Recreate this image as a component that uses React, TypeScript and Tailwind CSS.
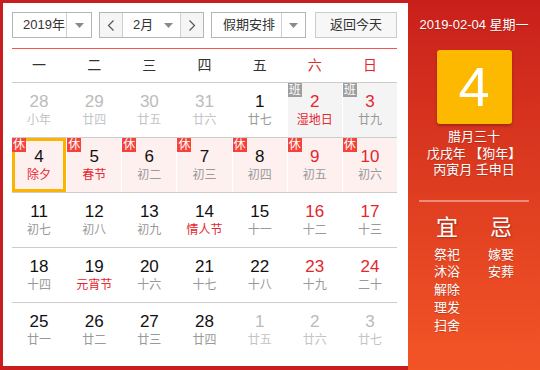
import React from 'react';

type Day = {
  n: number;
  lunar: string;
  tone?: 'other' | 'red';
  lunarRed?: boolean;
  badge?: '休' | '班';
  today?: boolean;
};

const weeks: Day[][] = [
  [
    { n: 28, lunar: '小年', tone: 'other' },
    { n: 29, lunar: '廿四', tone: 'other' },
    { n: 30, lunar: '廿五', tone: 'other' },
    { n: 31, lunar: '廿六', tone: 'other' },
    { n: 1, lunar: '廿七' },
    { n: 2, lunar: '湿地日', tone: 'red', lunarRed: true, badge: '班' },
    { n: 3, lunar: '廿九', tone: 'red', badge: '班' },
  ],
  [
    { n: 4, lunar: '除夕', lunarRed: true, badge: '休', today: true },
    { n: 5, lunar: '春节', lunarRed: true, badge: '休' },
    { n: 6, lunar: '初二', badge: '休' },
    { n: 7, lunar: '初三', badge: '休' },
    { n: 8, lunar: '初四', badge: '休' },
    { n: 9, lunar: '初五', tone: 'red', badge: '休' },
    { n: 10, lunar: '初六', tone: 'red', badge: '休' },
  ],
  [
    { n: 11, lunar: '初七' },
    { n: 12, lunar: '初八' },
    { n: 13, lunar: '初九' },
    { n: 14, lunar: '情人节', lunarRed: true },
    { n: 15, lunar: '十一' },
    { n: 16, lunar: '十二', tone: 'red' },
    { n: 17, lunar: '十三', tone: 'red' },
  ],
  [
    { n: 18, lunar: '十四' },
    { n: 19, lunar: '元宵节', lunarRed: true },
    { n: 20, lunar: '十六' },
    { n: 21, lunar: '十七' },
    { n: 22, lunar: '十八' },
    { n: 23, lunar: '十九', tone: 'red' },
    { n: 24, lunar: '二十', tone: 'red' },
  ],
  [
    { n: 25, lunar: '廿一' },
    { n: 26, lunar: '廿二' },
    { n: 27, lunar: '廿三' },
    { n: 28, lunar: '廿四' },
    { n: 1, lunar: '廿五', tone: 'other' },
    { n: 2, lunar: '廿六', tone: 'other' },
    { n: 3, lunar: '廿七', tone: 'other' },
  ],
];

const weekdays = ['一', '二', '三', '四', '五', '六', '日'];

function Caret() {
  return (
    <svg width="9" height="5" viewBox="0 0 9 5">
      <path d="M0 0h9L4.5 5z" fill="#8a8a8a" />
    </svg>
  );
}

function Chevron({ dir }: { dir: 'left' | 'right' }) {
  return (
    <svg width="8" height="11" viewBox="0 0 8 11">
      <path
        d={dir === 'left' ? 'M6.5 0.5L1.5 5.5l5 5' : 'M1.5 0.5l5 5-5 5'}
        fill="none"
        stroke="#555"
        strokeWidth="1.2"
      />
    </svg>
  );
}

function DayCell({ day }: { day: Day }) {
  const bg = day.badge === '休' ? 'bg-[#fff0f0]' : day.badge === '班' ? 'bg-[#f4f4f4]' : 'bg-white';
  const numColor =
    day.tone === 'other' ? 'text-[#bbbbbb]' : day.tone === 'red' ? 'text-[#e5262d]' : 'text-[#111]';
  const lunarColor =
    day.tone === 'other' ? 'text-[#c4c4c4]' : day.lunarRed ? 'text-[#e5262d]' : 'text-[#999]';

  return (
    <div
      className={`relative flex flex-col items-center pt-[9px] ${bg} ${
        day.today ? 'shadow-[inset_0_0_0_3px_#fbb500]' : ''
      }`}
    >
      <span className={`text-[17px] leading-[20px] ${numColor}`}>{day.n}</span>
      <span className={`text-[12px] leading-[16px] ${lunarColor}`}>{day.lunar}</span>
      {day.badge && (
        <span
          className={`absolute top-0 left-0 w-[14px] h-[14px] text-[12px] leading-[14px] text-center text-white ${
            day.badge === '休' ? 'bg-[#f5433c]' : 'bg-[#9e9e9e]'
          }`}
        >
          {day.badge}
        </span>
      )}
    </div>
  );
}

export default function App() {
  return (
    <div className="flex w-[540px] h-[370px] font-[family-name:Liberation_Sans,Noto_Sans_CJK_SC,sans-serif]">
      {/* Calendar */}
      <div className="w-[408px] h-full bg-white border-l-[3px] border-t-[3px] border-b-[4px] border-[#c91e1d] pl-[9px] pr-[11px] pt-[9px]">
        {/* Toolbar */}
        <div className="flex items-center h-[26px] text-[13px] text-[#333]">
          <div className="flex w-[80px] h-[26px] border border-[#b5b5b5]">
            <span className="flex-1 pl-[10px] leading-[24px]">2019年</span>
            <span className="w-[25px] flex items-center justify-center border-l border-[#cfcfcf]">
              <Caret />
            </span>
          </div>

          <div className="flex ml-[7px] w-[105px] h-[26px] border border-[#b5b5b5]">
            <span className="w-[23px] flex items-center justify-center bg-[#f5f5f5] border-r border-[#cfcfcf]">
              <Chevron dir="left" />
            </span>
            <span className="flex-1 flex items-center pl-[10px] pr-[7px] justify-between">
              <span className="leading-[24px]">2月</span>
              <Caret />
            </span>
            <span className="w-[23px] flex items-center justify-center bg-[#f5f5f5] border-l border-[#cfcfcf]">
              <Chevron dir="right" />
            </span>
          </div>

          <div className="flex ml-[7px] w-[95px] h-[26px] border border-[#b5b5b5]">
            <span className="flex-1 pl-[11px] leading-[24px]">假期安排</span>
            <span className="w-[24px] flex items-center justify-center border-l border-[#cfcfcf]">
              <Caret />
            </span>
          </div>

          <button className="ml-[9px] w-[82px] h-[26px] bg-[#f7f7f7] border border-[#cccccc] text-[13px] text-[#333] leading-[24px]">
            返回今天
          </button>
        </div>

        {/* Weekday header */}
        <div className="mt-[10px] grid grid-cols-7 gap-x-px h-[35px] border-t border-b border-t-[#f4554f] border-b-[#cccccc] items-center text-center text-[14px]">
          {weekdays.map((w, i) => (
            <span key={w} className={i >= 5 ? 'text-[#e5262d]' : 'text-[#333]'}>
              {w}
            </span>
          ))}
        </div>

        {/* Days */}
        {weeks.map((week, wi) => (
          <div
            key={wi}
            className={`grid grid-cols-7 gap-x-px h-[55px] ${
              wi < weeks.length - 1 ? 'border-b border-[#cccccc]' : ''
            }`}
          >
            {week.map((d, di) => (
              <DayCell key={di} day={d} />
            ))}
          </div>
        ))}
      </div>

      {/* Side panel */}
      <div className="w-[132px] h-full flex flex-col items-center bg-linear-to-b from-[#c91f1b] to-[#f35426] text-white [text-shadow:0_1px_1px_rgba(0,0,0,0.2)]">
        <div className="mt-[16px] text-[13px] leading-[18px]">2019-02-04 星期一</div>
        <div className="mt-[16px] w-[75px] h-[74px] rounded-[3px] bg-[#fdb900] shadow-[0_2px_3px_rgba(0,0,0,0.25)] flex items-center justify-center text-[56px] leading-none [text-shadow:none]">
          4
        </div>
        <div className="mt-[5px] flex flex-col items-center text-[13px] leading-[16.5px]">
          <span>腊月三十</span>
          <span>戊戌年 【狗年】</span>
          <span>丙寅月 壬申日</span>
        </div>
        <div className="mt-[21px] w-[110px] h-[2px] bg-white/40" />
        <div className="mt-[13px] flex gap-[28px]">
          <div className="flex flex-col items-center">
            <span className="text-[22px] leading-[26px] [text-shadow:1px_1px_2px_rgba(0,0,0,0.3)]">宜</span>
            <div className="mt-[5px] flex flex-col text-[13px] leading-[17.8px]">
              <span>祭祀</span>
              <span>沐浴</span>
              <span>解除</span>
              <span>理发</span>
              <span>扫舍</span>
            </div>
          </div>
          <div className="flex flex-col items-center">
            <span className="text-[22px] leading-[26px] [text-shadow:1px_1px_2px_rgba(0,0,0,0.3)]">忌</span>
            <div className="mt-[5px] flex flex-col text-[13px] leading-[17.8px]">
              <span>嫁娶</span>
              <span>安葬</span>
            </div>
          </div>
        </div>
      </div>
    </div>
  );
}
